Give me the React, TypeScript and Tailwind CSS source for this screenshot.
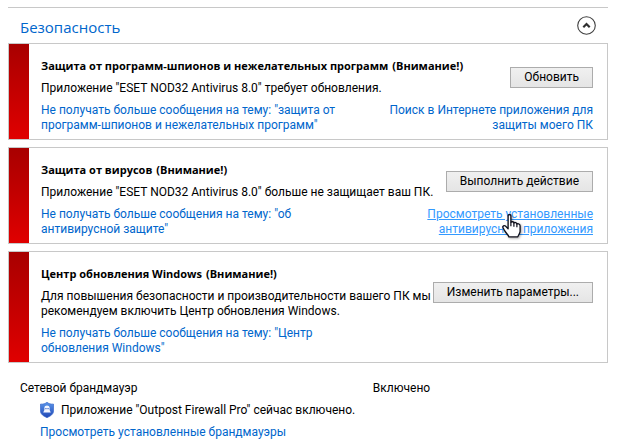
interface Alert {
  title: string
  text: string
  mute: string
  action: string
  link?: string
  hovered?: boolean
}

const alerts: Alert[] = [
  {
    title: "Защита от программ-шпионов и нежелательных программ",
    text: 'Приложение "ESET NOD32 Antivirus 8.0" требует обновления.',
    mute: 'Не получать больше сообщения на тему: "защита от\nпрограмм-шпионов и нежелательных программ"',
    action: "Обновить",
    link: "Поиск в Интернете приложения для\nзащиты моего ПК",
  },
  {
    title: "Защита от вирусов",
    text: 'Приложение "ESET NOD32 Antivirus 8.0" больше не защищает ваш ПК.',
    mute: 'Не получать больше сообщения на тему: "об\nантивирусной защите"',
    action: "Выполнить действие",
    link: "Просмотреть установленные\nантивирусные приложения",
    hovered: true,
  },
  {
    title: "Центр обновления Windows",
    text: "Для повышения безопасности и производительности вашего ПК мы\nрекомендуем включить Центр обновления Windows.",
    mute: 'Не получать больше сообщения на тему: "Центр\nобновления Windows"',
    action: "Изменить параметры...",
  },
]

function HandCursor() {
  return (
    <svg
      className="absolute top-[7px] right-[71px] drop-shadow-[1px_1px_1px_#0005]"
      width="20"
      height="25"
      viewBox="0 0 18 22.5"
      aria-hidden="true"
    >
      <path
        d="M5.5 1.5C5.5 .2 8 .2 8 1.5V7.5C8.6 6.6 10.6 6.9 10.7 8C11.5 7.3 13.2 7.7 13.4 9C14.5 8.4 16.3 9 16.3 10.7V15.5C16.3 17.5 14.8 18.6 14.2 20.6H6.2C6 19.2 3.8 17.6 2.2 14.8L.9 12.2C.4 10.8 2 9.9 3.1 10.9L5.5 13.3Z"
        fill="#fff"
        stroke="#10101c"
        strokeWidth="1.2"
        strokeLinejoin="round"
      />
      <path d="M8 7.5V11M10.7 8V11.5M13.4 9V12" stroke="#10101c" strokeWidth="1.1" fill="none" />
    </svg>
  )
}

function ShieldIcon() {
  return (
    <svg className="shrink-0" width="14" height="16" viewBox="0 0 14 16" aria-hidden="true">
      <defs>
        <linearGradient id="shield" x1="0" y1="0" x2="0" y2="1">
          <stop offset="0" stopColor="#5a96ea" />
          <stop offset="1" stopColor="#2046b4" />
        </linearGradient>
      </defs>
      <path
        d="M7 .3C8.7 1.7 11 2.3 13.5 2.1V9C13.5 12.3 10.5 14 7 15.7C3.5 14 .5 12.3 .5 9V2.1C3 2.3 5.3 1.7 7 .3Z"
        fill="url(#shield)"
        stroke="#3a69cc"
        strokeWidth=".7"
      />
      <path d="M4.4 8V5.6C4.4 2.8 9.6 2.8 9.6 5.6V8L10.8 10.6H3.2Z" fill="#f2f6ff" />
      <path d="M5.4 6H6.5V7.3H5.4ZM7.5 6H8.6V7.3H7.5Z" fill="#2c5bc4" />
    </svg>
  )
}

function AlertCard({ alert }: { alert: Alert }) {
  return (
    <section className="flex border border-[#c8c8c8]">
      <div className="w-5 shrink-0 bg-linear-to-b from-[#a80000] to-[#e00000]" />
      <div className="flex-1 pt-[14px] pr-[14px] pb-1.5 pl-3">
        <div className="flex items-center justify-between">
          <div>
            <h2 className="flex gap-1 font-['Open_Sans','Noto_Sans',sans-serif] text-[11px] leading-[15px] font-bold">
              <span>{alert.title}</span>
              <span>(Внимание!)</span>
            </h2>
            <p className="mt-2 whitespace-pre">{alert.text}</p>
          </div>
          <button
            type="button"
            className="h-[21px] shrink-0 border border-[#acacac] bg-linear-to-b from-[#f0f0f0] to-[#e5e5e5] px-[13px]"
          >
            {alert.action}
          </button>
        </div>
        <div className="mt-[7px] flex justify-between">
          <a href="#" className="whitespace-pre text-[#0066cc]">
            {alert.mute}
          </a>
          {alert.link && (
            <div className="relative text-right">
              <a href="#" className={alert.hovered ? "whitespace-pre text-[#3399ff] underline" : "whitespace-pre text-[#0066cc]"}>
                {alert.link}
              </a>
              {alert.hovered && <HandCursor />}
            </div>
          )}
        </div>
      </div>
    </section>
  )
}

export default function App() {
  return (
    <main className="bg-white pt-[7px] pr-2.5 pl-2 font-['Roboto','Noto_Sans',sans-serif] text-[12px] leading-[15px] text-black">
      <header className="flex h-9 items-center justify-between border-t border-[#c8c8c8] pr-3 pl-3">
        <h1 className="pt-0.5 font-['Open_Sans','Noto_Sans',sans-serif] text-[15px] leading-5 text-[#0066cc]">
          Безопасность
        </h1>
        <button type="button" aria-label="Свернуть">
          <svg width="19" height="19" viewBox="0 0 19 19" fill="none" aria-hidden="true">
            <circle cx="9.5" cy="9.5" r="8.8" stroke="#404040" strokeWidth="1.1" />
            <path d="M6.3 11.2L9.5 8L12.7 11.2" stroke="#303030" strokeWidth="2.2" />
          </svg>
        </button>
      </header>

      <div className="flex flex-col gap-[7px]">
        {alerts.map((alert) => (
          <AlertCard key={alert.title} alert={alert} />
        ))}
      </div>

      <section className="mt-[18px] pl-3">
        <div className="grid grid-cols-[3fr_2fr]">
          <h2>Сетевой брандмауэр</h2>
          <span>Включено</span>
        </div>
        <div className="mt-1.5 flex flex-col gap-[7px] pl-5">
          <div className="flex items-center gap-[7px]">
            <ShieldIcon />
            <p>Приложение "Outpost Firewall Pro" сейчас включено.</p>
          </div>
          <a href="#" className="text-[#0066cc]">
            Просмотреть установленные брандмауэры
          </a>
        </div>
      </section>
    </main>
  )
}
